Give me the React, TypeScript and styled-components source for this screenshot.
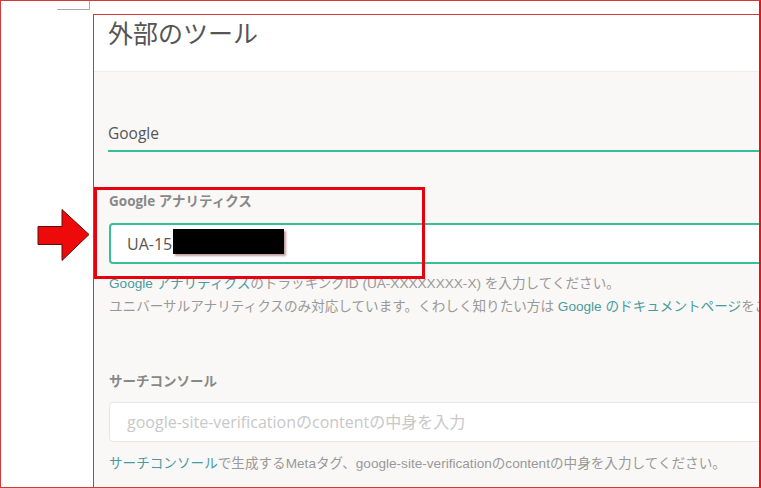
import React from "react";
import styled, { createGlobalStyle } from "styled-components";

const GlobalStyle = createGlobalStyle`
  html, body { margin: 0; padding: 0; background: #ffffff; }
  body { font-family: "Open Sans", "Noto Sans CJK JP", sans-serif; }
  * { box-sizing: border-box; }
`;

const TEAL = "#35c09a";
const LINK = "#4a9ba0";

const Frame = styled.div`
  position: relative;
  width: 761px;
  height: 488px;
  border: 1px solid #d23a3a;
  border-right: 2px solid #e8101a;
  display: grid;
  grid-template-columns: 92px 1fr;
  overflow: hidden;
  background: #ffffff;
`;

const Gutter = styled.div`
  background: #ffffff;
`;

const CornerMark = styled.div`
  position: absolute;
  left: 56px;
  top: 0;
  width: 33px;
  height: 9px;
  border-right: 1px solid #a8a8a8;
  border-bottom: 1px solid #a8a8a8;
`;

const Panel = styled.div`
  margin-top: 13px;
  border-top: 1px solid #d23a3a;
  border-left: 1px solid #c83a3a;
  overflow: hidden;
  display: flex;
  flex-direction: column;
  min-width: 0;
`;

const Header = styled.div`
  height: 57px;
  background: #ffffff;
  border-bottom: 1px solid #eeeeee;
  padding-left: 14px;
`;

const Title = styled.h1`
  margin: 0;
  font-family: "Noto Sans CJK JP", sans-serif;
  font-weight: 400;
  font-size: 25px;
  line-height: 35px;
  color: #555555;
`;

const Body = styled.div`
  flex: 1;
  background: #f9f8f6;
  padding: 51px 0 0 15px;
  display: flex;
  flex-direction: column;
`;

const Tab = styled.div`
  width: 700px;
  font-family: "Open Sans", "Noto Sans CJK JP", sans-serif;
  font-size: 15.5px;
  line-height: 20px;
  color: #555555;
  padding-bottom: 7px;
  border-bottom: 2px solid ${TEAL};
  margin-left: -1px;
`;

const Field = styled.div<{ $top: number }>`
  margin-top: ${(p) => p.$top}px;
  display: flex;
  flex-direction: column;
`;

const Label = styled.div<{ $size: number }>`
  font-family: "Open Sans", "Noto Sans CJK JP", sans-serif;
  font-weight: 700;
  font-size: ${(p) => p.$size}px;
  line-height: 18px;
  color: #888888;
`;

const InputWrap = styled.div<{ $top: number }>`
  position: relative;
  margin-top: ${(p) => p.$top}px;
  width: 700px;
`;

const TextInput = styled.input<{ $focus?: boolean }>`
  display: block;
  width: 100%;
  height: ${(p) => (p.$focus ? 41 : 40)}px;
  border: ${(p) => (p.$focus ? `2px solid ${TEAL}` : "1px solid #e6e6e6")};
  border-radius: 4px;
  background: #ffffff;
  padding: 0 0 0 ${(p) => (p.$focus ? 16 : 17)}px;
  font-family: "Open Sans", "Noto Sans CJK JP", sans-serif;
  font-size: 16px;
  color: #555555;
  outline: none;
  &::placeholder {
    color: #c8c8c8;
  }
`;

const Redaction = styled.div`
  position: absolute;
  left: 64px;
  top: 6px;
  width: 111px;
  height: 25px;
  background: #000000;
  box-shadow: 2px 2px 2px rgba(150, 90, 90, 0.6);
`;

const Help = styled.div<{ $top: number }>`
  margin-top: ${(p) => p.$top}px;
  font-family: "Liberation Sans", "Noto Sans CJK JP", sans-serif;
  font-size: 13.6px;
  line-height: 23px;
  color: #999999;
  white-space: nowrap;
`;

const Link = styled.a`
  color: ${LINK};
  text-decoration: none;
`;

const Highlight = styled.div`
  position: absolute;
  left: 93px;
  top: 186px;
  width: 331px;
  height: 92px;
  border: 3px solid #e8000c;
  pointer-events: none;
`;

const Arrow = styled.svg`
  position: absolute;
  left: 36px;
  top: 207px;
`;

export default function App() {
  return (
    <>
      <GlobalStyle />
      <Frame>
        <Gutter />
        <Panel>
          <Header>
            <Title>外部のツール</Title>
          </Header>
          <Body>
            <Tab>Google</Tab>
            <Field $top={40}>
              <Label $size={13.5}>Google アナリティクス</Label>
              <InputWrap $top={13}>
                <TextInput $focus readOnly defaultValue="UA-15" />
                <Redaction />
              </InputWrap>
              <Help $top={8}>
                <Link>Google アナリティクス</Link>のトラッキングID (UA-XXXXXXXX-X) を入力してください。
                <br />
                ユニバーサルアナリティクスのみ対応しています。くわしく知りたい方は{" "}
                <Link>Google のドキュメントページ</Link>をご覧ください。
              </Help>
            </Field>
            <Field $top={54}>
              <Label $size={13.5}>サーチコンソール</Label>
              <InputWrap $top={12}>
                <TextInput
                  readOnly
                  placeholder="google-site-verificationのcontentの中身を入力"
                />
              </InputWrap>
              <Help $top={10}>
                <Link>サーチコンソール</Link>で生成するMetaタグ、google-site-verificationのcontentの中身を入力してください。
              </Help>
            </Field>
          </Body>
        </Panel>
        <CornerMark />
        <Highlight />
        <Arrow width="54" height="56" viewBox="0 0 54 56">
          <polygon
            points="1,18.5 25,18.5 25,1.5 52,26.5 25,52.5 25,36.5 1,36.5"
            fill="#ee0a0a"
            stroke="#5a1010"
            strokeWidth="1"
            strokeLinejoin="miter"
          />
        </Arrow>
      </Frame>
    </>
  );
}
